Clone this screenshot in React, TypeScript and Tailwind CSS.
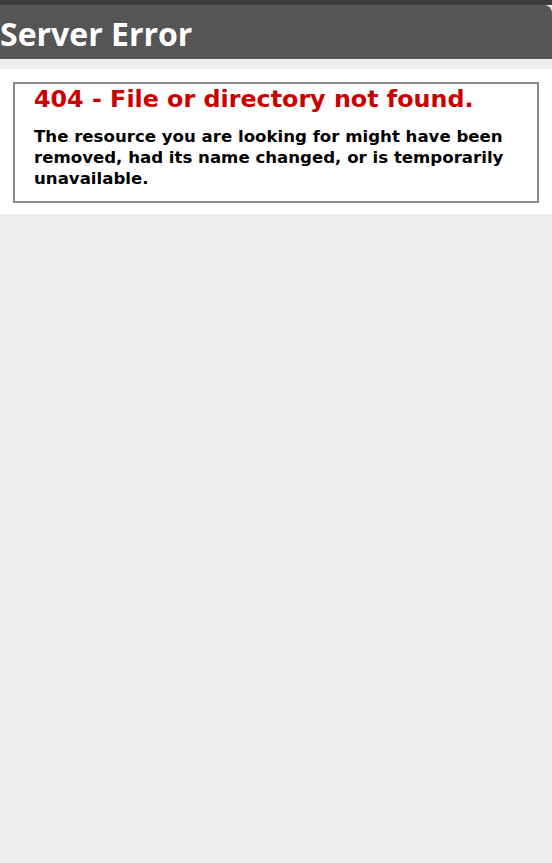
export default function App() {
  return (
    <div className="min-h-[863px] bg-[#eeeeee] font-['DejaVu_Sans',Verdana,sans-serif]">
      <div className="h-[5px] bg-[#3c3c3c]" />
      <div className="h-[54px] bg-[#555555] rounded-tr-[8px] flex items-center">
        <h1 className="m-0 text-white font-bold text-[32px] leading-none font-['Open_Sans',sans-serif] pt-[4px]">Server Error</h1>
      </div>
      <div className="mt-[10px] bg-white pt-[13px] pb-[11px]">
        <div className="mx-[13px] border-2 border-[#8a8a8a] px-[19px] pb-[12px]">
          <h2 className="m-0 pt-[1px] text-[#cc0000] font-bold text-[23.8px] leading-[29px]">404 - File or directory not found.</h2>
          <h3 className="mt-[12px] text-black font-bold text-[16.6px] leading-[21px]">The resource you are looking for might have been removed, had its name changed, or is temporarily unavailable.</h3>
        </div>
      </div>
    </div>
  );
}
